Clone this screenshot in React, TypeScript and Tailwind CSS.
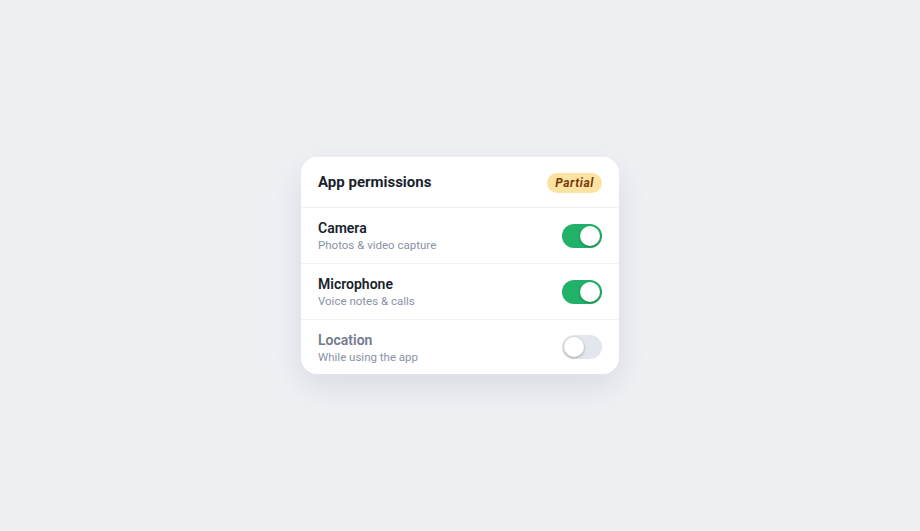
import { useState } from "react";

type Perm = { id: string; label: string; hint: string; on: boolean };

function Toggle({ on, onChange }: { on: boolean; onChange: () => void }) {
  return (
    <button
      type="button"
      onClick={onChange}
      className={`relative h-6 w-10 shrink-0 rounded-full transition-colors ${on ? "bg-[#22b168]" : "bg-[#e3e6ec]"}`}
    >
      <span
        className={`absolute top-[2px] h-5 w-5 rounded-full bg-white shadow-[0_1px_3px_rgba(0,0,0,0.3)] transition-all ${on ? "left-[18px]" : "left-[2px]"}`}
      />
    </button>
  );
}

export default function App() {
  const [perms, setPerms] = useState<Perm[]>([
    { id: "camera", label: "Camera", hint: "Photos & video capture", on: true },
    { id: "mic", label: "Microphone", hint: "Voice notes & calls", on: true },
    { id: "location", label: "Location", hint: "While using the app", on: false },
  ]);

  const toggle = (id: string) =>
    setPerms((p) => p.map((x) => (x.id === id ? { ...x, on: !x.on } : x)));

  return (
    <div className="flex min-h-screen items-center justify-center bg-[#eff0f4] font-['Roboto',sans-serif]">
      <div className="w-[318px] overflow-hidden rounded-2xl bg-white shadow-[0_12px_32px_rgba(30,40,70,0.10)]">
        {/* header */}
        <div className="flex h-[51px] items-center justify-between border-b border-[#eef0f3] px-[17px] pt-[1px]">
          <h2 className="text-[15px] font-bold text-[#1a1f2e]">App permissions</h2>
          <span className="rounded-full bg-[#fde3a2] px-[8px] py-[1px] text-[12px] font-bold italic tracking-[0.05em] text-[#743a0c]">
            Partial
          </span>
        </div>

        {/* rows */}
        {perms.map((p, i) => (
          <div
            key={p.id}
            className={`flex items-center justify-between px-[17px] ${i < perms.length - 1 ? "h-[56px] border-b border-[#f0f1f4]" : "h-[54px]"}`}
          >
            <div className="flex flex-col pt-[2px]">
              <span className={`text-[14px] font-semibold leading-[17px] ${p.on ? "text-[#1a1f2e]" : "text-[#737b8c]"}`}>
                {p.label}
              </span>
              <span className="text-[11.5px] leading-[16px] text-[#8a92a6]">{p.hint}</span>
            </div>
            <Toggle on={p.on} onChange={() => toggle(p.id)} />
          </div>
        ))}
      </div>
    </div>
  );
}
